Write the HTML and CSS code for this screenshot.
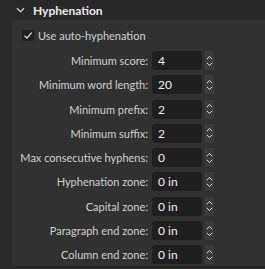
FILE: index.html
```html
<!DOCTYPE html>
<html>
<head>
<meta charset="utf-8">
<link rel="stylesheet" href="styles.css">
</head>
<body>
<div class="panel">
  <div class="header">
    <svg class="chev" width="9" height="6" viewBox="0 0 9 6"><path d="M1 1.2 L4.5 4.6 L8 1.2" fill="none" stroke="#d8d8d8" stroke-width="1.3"/></svg>
    <span class="title">Hyphenation</span>
  </div>
  <div class="check-row">
    <span class="checkbox"><svg width="10" height="9" viewBox="0 0 10 9"><path d="M1.5 4.8 L3.9 7.1 L8.6 1.6" fill="none" stroke="#e6e6e6" stroke-width="1.2"/></svg></span>
    <span class="check-label">Use auto-hyphenation</span>
  </div>
  <div class="form">
    <label>Minimum score:</label><div class="field">4</div><div class="spin"><svg width="7" height="12" viewBox="0 0 7 12"><path d="M0.8 4.2 L3.5 1.5 L6.2 4.2 M0.8 7.8 L3.5 10.5 L6.2 7.8" fill="none" stroke="#dcdcdc" stroke-width="1"/></svg></div>
    <label>Minimum word length:</label><div class="field">20</div><div class="spin"><svg width="7" height="12" viewBox="0 0 7 12"><path d="M0.8 4.2 L3.5 1.5 L6.2 4.2 M0.8 7.8 L3.5 10.5 L6.2 7.8" fill="none" stroke="#dcdcdc" stroke-width="1"/></svg></div>
    <label>Minimum prefix:</label><div class="field">2</div><div class="spin"><svg width="7" height="12" viewBox="0 0 7 12"><path d="M0.8 4.2 L3.5 1.5 L6.2 4.2 M0.8 7.8 L3.5 10.5 L6.2 7.8" fill="none" stroke="#dcdcdc" stroke-width="1"/></svg></div>
    <label>Minimum suffix:</label><div class="field">2</div><div class="spin"><svg width="7" height="12" viewBox="0 0 7 12"><path d="M0.8 4.2 L3.5 1.5 L6.2 4.2 M0.8 7.8 L3.5 10.5 L6.2 7.8" fill="none" stroke="#dcdcdc" stroke-width="1"/></svg></div>
    <label>Max consecutive hyphens:</label><div class="field">0</div><div class="spin"><svg width="7" height="12" viewBox="0 0 7 12"><path d="M0.8 4.2 L3.5 1.5 L6.2 4.2 M0.8 7.8 L3.5 10.5 L6.2 7.8" fill="none" stroke="#dcdcdc" stroke-width="1"/></svg></div>
    <label>Hyphenation zone:</label><div class="field">0 in</div><div class="spin"><svg width="7" height="12" viewBox="0 0 7 12"><path d="M0.8 4.2 L3.5 1.5 L6.2 4.2 M0.8 7.8 L3.5 10.5 L6.2 7.8" fill="none" stroke="#dcdcdc" stroke-width="1"/></svg></div>
    <label>Capital zone:</label><div class="field">0 in</div><div class="spin"><svg width="7" height="12" viewBox="0 0 7 12"><path d="M0.8 4.2 L3.5 1.5 L6.2 4.2 M0.8 7.8 L3.5 10.5 L6.2 7.8" fill="none" stroke="#dcdcdc" stroke-width="1"/></svg></div>
    <label>Paragraph end zone:</label><div class="field">0 in</div><div class="spin"><svg width="7" height="12" viewBox="0 0 7 12"><path d="M0.8 4.2 L3.5 1.5 L6.2 4.2 M0.8 7.8 L3.5 10.5 L6.2 7.8" fill="none" stroke="#dcdcdc" stroke-width="1"/></svg></div>
    <label>Column end zone:</label><div class="field">0 in</div><div class="spin"><svg width="7" height="12" viewBox="0 0 7 12"><path d="M0.8 4.2 L3.5 1.5 L6.2 4.2 M0.8 7.8 L3.5 10.5 L6.2 7.8" fill="none" stroke="#dcdcdc" stroke-width="1"/></svg></div>
  </div>
</div>
</body>
</html>
```

FILE: styles.css
```css
html, body {
  margin: 0;
  padding: 0;
  height: 100%;
  background: #2a2a2a;
  font-family: Lato, "Open Sans", sans-serif;
  overflow: hidden;
}
.panel {
  margin-left: 12px;
  height: 266px;
  background: #313131;
  border-bottom: 1px solid #262626;
}
.header {
  height: 20px;
  background: #282828;
  display: flex;
  align-items: center;
  padding-left: 4px;
}
.chev {
  margin-right: 8px;
}
.title {
  color: #ececec;
  font-size: 12px;
  font-weight: 700;
}
.check-row {
  display: flex;
  align-items: center;
  height: 18px;
  margin-top: 6px;
  padding-left: 10px;
}
.checkbox {
  width: 12px;
  height: 11px;
  background: #1f1f1f;
  border-radius: 2px;
  display: flex;
  align-items: center;
  justify-content: center;
  margin-right: 4px;
}
.check-label {
  color: #d2d2d2;
  font-size: 11px;
}
.form {
  display: grid;
  grid-template-columns: 137px 50px 9px;
  column-gap: 3px;
  grid-auto-rows: 19px;
  row-gap: 5.3px;
  margin-top: 7px;
}
.form label {
  color: #d0d0d0;
  font-size: 11px;
  text-align: right;
  line-height: 19px;
  white-space: nowrap;
  padding-right: 1px;
}
.field {
  background: #1f1f1f;
  border-radius: 3px;
  color: #f0f0f0;
  font-size: 12px;
  line-height: 19px;
  padding-left: 6px;
}
.spin {
  background: #3b3b3b;
  display: flex;
  align-items: center;
  justify-content: center;
}
```
